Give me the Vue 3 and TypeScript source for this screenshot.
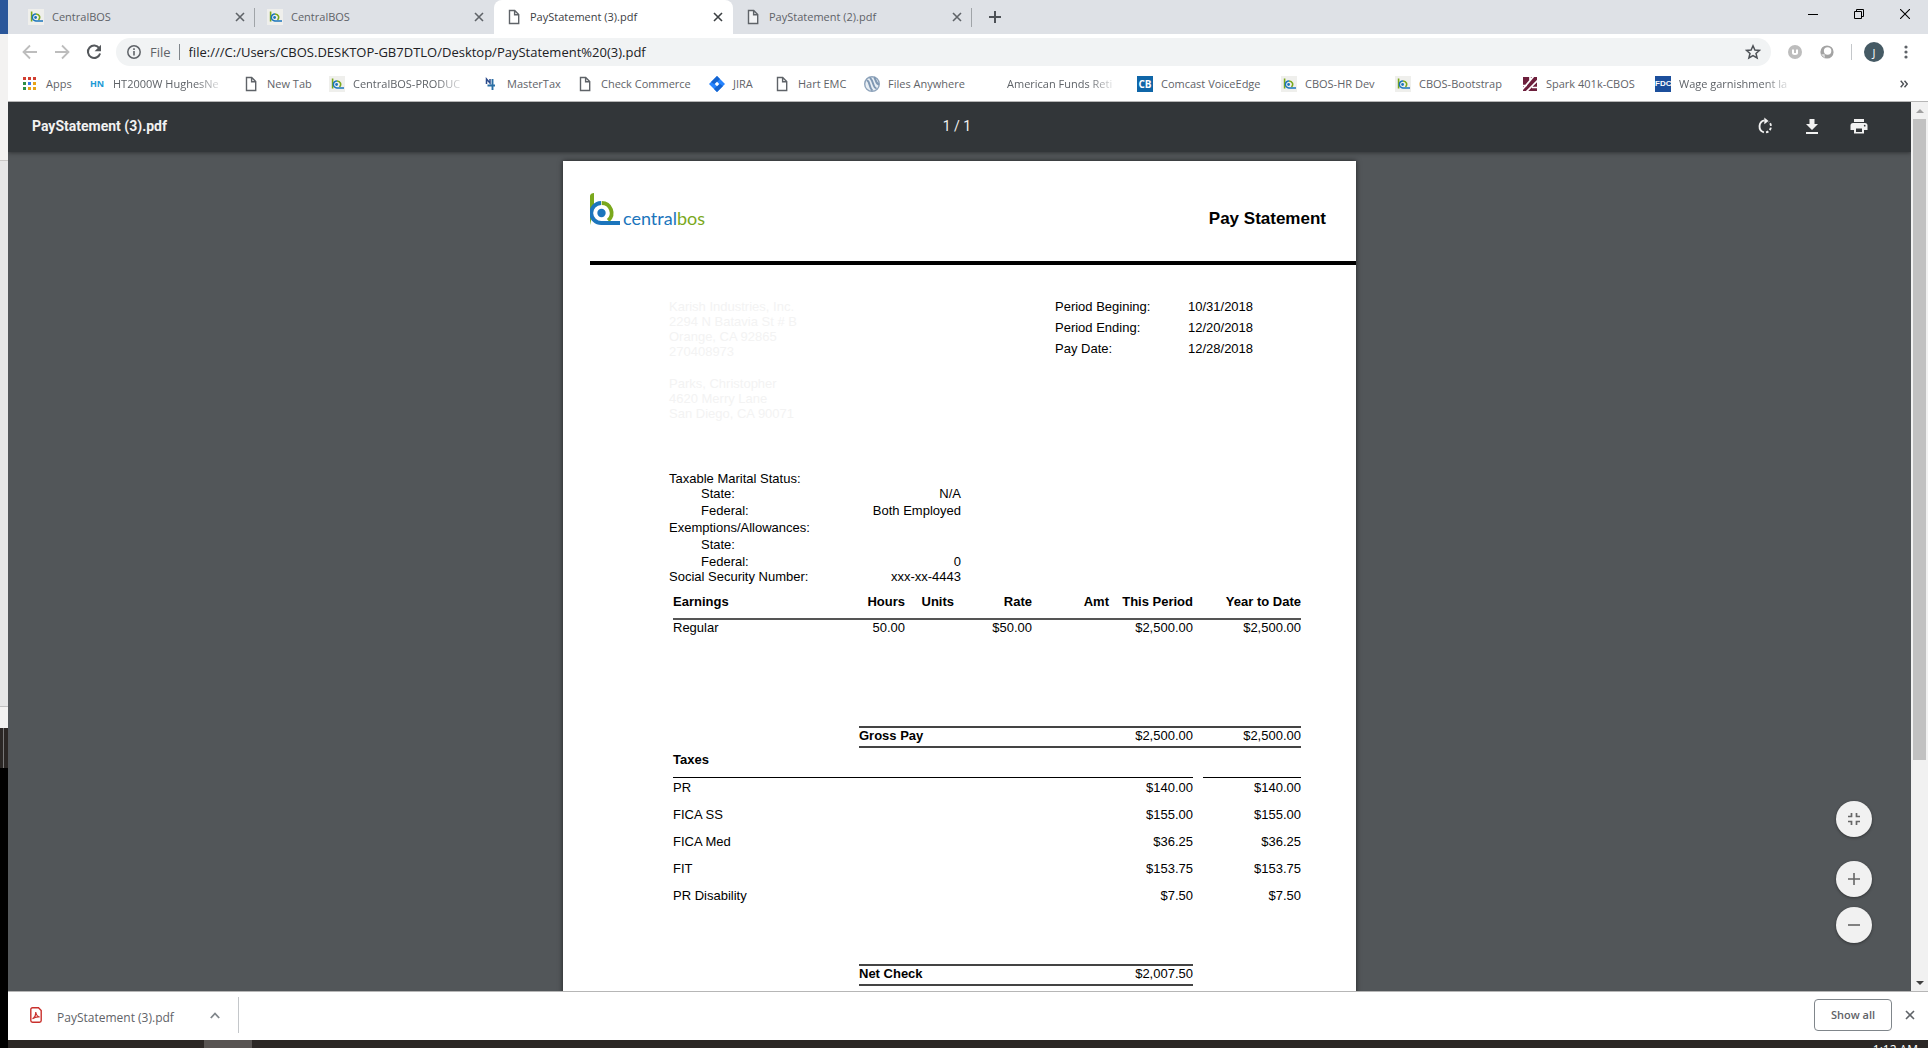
<script setup lang="ts">
import { ref } from 'vue'

interface Tab {
  title: string
  icon: 'cbos' | 'doc'
}
interface Bookmark {
  label: string
  icon: string
  width: number
  fade?: boolean
}
interface TaxLine {
  name: string
  current: string
  ytd: string
}

const tabs: Tab[] = [
  { title: 'CentralBOS', icon: 'cbos' },
  { title: 'CentralBOS', icon: 'cbos' },
  { title: 'PayStatement (3).pdf', icon: 'doc' },
  { title: 'PayStatement (2).pdf', icon: 'doc' },
]
const activeTab = ref(2)
const address = ref('file:///C:/Users/CBOS.DESKTOP-GB7DTLO/Desktop/PayStatement%20(3).pdf')

const bookmarks: Bookmark[] = [
  { label: 'Apps', icon: 'apps', width: 67 },
  { label: 'HT2000W HughesNe', icon: 'hn', width: 154, fade: true },
  { label: 'New Tab', icon: 'doc', width: 86 },
  { label: 'CentralBOS-PRODUC', icon: 'cbos', width: 154, fade: true },
  { label: 'MasterTax', icon: 'mt', width: 94 },
  { label: 'Check Commerce', icon: 'doc', width: 132 },
  { label: 'JIRA', icon: 'jira', width: 65 },
  { label: 'Hart EMC', icon: 'doc', width: 90 },
  { label: 'Files Anywhere', icon: 'files', width: 119 },
  { label: 'American Funds Reti', icon: 'none', width: 154, fade: true },
  { label: 'Comcast VoiceEdge', icon: 'cb', width: 144 },
  { label: 'CBOS-HR Dev', icon: 'cbos', width: 114 },
  { label: 'CBOS-Bootstrap', icon: 'cbos', width: 127 },
  { label: 'Spark 401k-CBOS', icon: 'spark', width: 133 },
  { label: 'Wage garnishment la', icon: 'fdc', width: 153, fade: true },
]

const periods = [
  ['Period Begining:', '10/31/2018'],
  ['Period Ending:', '12/20/2018'],
  ['Pay Date:', '12/28/2018'],
]

const status = [
  { label: 'Taxable Marital Status:', value: '', sub: false, tight: true },
  { label: 'State:', value: 'N/A', sub: true, tight: false },
  { label: 'Federal:', value: 'Both Employed', sub: true, tight: false },
  { label: 'Exemptions/Allowances:', value: '', sub: false, tight: false },
  { label: 'State:', value: '', sub: true, tight: false },
  { label: 'Federal:', value: '0', sub: true, tight: true },
  { label: 'Social Security Number:', value: 'xxx-xx-4443', sub: false, tight: true },
]

const taxes: TaxLine[] = [
  { name: 'PR', current: '$140.00', ytd: '$140.00' },
  { name: 'FICA SS', current: '$155.00', ytd: '$155.00' },
  { name: 'FICA Med', current: '$36.25', ytd: '$36.25' },
  { name: 'FIT', current: '$153.75', ytd: '$153.75' },
  { name: 'PR Disability', current: '$7.50', ytd: '$7.50' },
]

const appColors = ['#d23f31', '#d23f31', '#d23f31', '#2f8f46', '#3b78e7', '#e8a317', '#2f8f46', '#e8a317', '#e8a317']
</script>

<template>
  <div class="desktop">
    <svg class="sprite" aria-hidden="true">
      <symbol id="i-cbos" viewBox="0 0 16 16">
        <rect width="16" height="16" fill="#efefec" />
        <path d="M3.6 2.5v10" stroke="#7aa81c" stroke-width="1.6" fill="none" />
        <path d="M8 4.9a3.6 3.4 0 0 1 2.4 6" stroke="#7aa81c" stroke-width="1.5" fill="none" />
        <path d="M8 4.9a3.5 3.5 0 0 0-.2 7H15" stroke="#1b75bc" stroke-width="1.5" fill="none" />
        <circle cx="7.6" cy="8.5" r="1.4" fill="#1b75bc" />
      </symbol>
      <symbol id="i-doc" viewBox="0 0 16 16">
        <path d="M3.5 1.5h5.2l4 4v9H3.5z M8.6 1.7v4h4" fill="#fff" fill-opacity="0.6" stroke="#5f6368" stroke-width="1.4" />
      </symbol>
      <symbol id="i-close" viewBox="0 0 10 10">
        <path d="M1 1l8 8M9 1l-8 8" fill="none" stroke="currentColor" stroke-width="1.6" />
      </symbol>
    </svg>

    <div class="behind" aria-hidden="true">
      <i class="b-title"></i><i class="b-ribbon"></i><i class="b-body"></i><i class="b-status"></i><i class="b-task"></i>
    </div>

    <main class="browser">
      <header class="tabstrip">
        <div
          v-for="(tab, i) in tabs"
          :key="i"
          class="tab"
          :class="{ active: i === activeTab, divided: i !== activeTab && i + 1 !== activeTab }"
        >
          <svg class="ico"><use :href="'#i-' + tab.icon" /></svg>
          <button type="button" class="tab-title" @click="activeTab = i">{{ tab.title }}</button>
          <button type="button" class="tab-close" aria-label="Close tab"><svg><use href="#i-close" /></svg></button>
        </div>
        <button type="button" class="new-tab" aria-label="New tab">
          <svg viewBox="0 0 12 12"><path d="M6 0v12M0 6h12" stroke="#4d5156" stroke-width="2" /></svg>
        </button>
        <div class="win-controls">
          <button type="button" aria-label="Minimize">
            <svg viewBox="0 0 10 10"><path d="M0 5.5h10" stroke="#000" /></svg>
          </button>
          <button type="button" aria-label="Restore">
            <svg viewBox="0 0 10 10"><path d="M.5 2.5h7v7h-7zM2.500 2.500v-2h7v7h-2" fill="none" stroke="#000" /></svg>
          </button>
          <button type="button" aria-label="Close">
            <svg viewBox="0 0 10 10"><path d="M0 0l10 10M10 0L0 10" stroke="#000" stroke-width="1.1" /></svg>
          </button>
        </div>
      </header>

      <div class="navbar">
        <button type="button" class="nav" aria-label="Back">
          <svg viewBox="0 0 16 16"><path d="M15 8H2M8 1.500L1.500 8 8 14.500" fill="none" stroke="#bdbdbd" stroke-width="1.8" /></svg>
        </button>
        <button type="button" class="nav" aria-label="Forward">
          <svg viewBox="0 0 16 16"><path d="M1 8h13M8 1.500L14.500 8 8 14.500" fill="none" stroke="#bdbdbd" stroke-width="1.800" /></svg>
        </button>
        <button type="button" class="nav" aria-label="Reload">
          <svg viewBox="0 0 16 16">
            <path d="M13.300 4.300A6.200 6.200 0 1 0 14.100 9.500" fill="none" stroke="#55585c" stroke-width="2" />
            <path d="M15 .8v6.400H8.600z" fill="#55585c" />
          </svg>
        </button>
        <div class="omnibox">
          <svg class="info" viewBox="0 0 14 14">
            <circle cx="7" cy="7" r="6.200" fill="none" stroke="#5f6368" stroke-width="1.500" />
            <path d="M7 6v4.500M7 3.300v1.600" stroke="#5f6368" stroke-width="1.600" />
          </svg>
          <span class="scheme">File</span>
          <input v-model="address" class="url" aria-label="Address" spellcheck="false" />
          <button type="button" class="star" aria-label="Bookmark this page">
            <svg viewBox="0 0 16 16">
              <path d="M8 1.800l1.900 4.200 4.600.4-3.500 3 1.100 4.500L8 11.500l-4.100 2.400L5 9.400l-3.500-3 4.600-.4z" fill="none" stroke="#4d5156" stroke-width="1.500" />
            </svg>
          </button>
        </div>
        <div class="extensions">
          <svg viewBox="0 0 14 14">
            <circle cx="7" cy="7" r="7" fill="#bdbdbd" />
            <path d="M4 4.500h2V8h2V4.500h2V8c0 1.300-1 2-3 2s-3-.7-3-2z" fill="#fff" />
          </svg>
          <svg viewBox="0 0 14 14">
            <circle cx="7" cy="7" r="6.600" fill="#a3a3a3" />
            <circle cx="7.600" cy="6" r="3.700" fill="#fff" />
            <path d="M1 9.500l3.500-.5L5 13z" fill="#dedede" />
          </svg>
        </div>
        <button type="button" class="avatar">J</button>
        <button type="button" class="kebab" aria-label="Menu">
          <svg viewBox="0 0 4 14"><circle cx="2" cy="2" r="1.600" /><circle cx="2" cy="7" r="1.600" /><circle cx="2" cy="12" r="1.600" /></svg>
        </button>
      </div>

      <nav class="bookmarks">
        <a v-for="(b, i) in bookmarks" :key="i" href="#" class="bookmark" :style="{ width: b.width + 'px' }">
          <svg v-if="b.icon === 'cbos' || b.icon === 'doc'" class="ico"><use :href="'#i-' + b.icon" /></svg>
          <svg v-else-if="b.icon === 'apps'" class="ico" viewBox="0 0 16 16">
            <rect
              v-for="(c, n) in appColors"
              :key="n"
              :x="1 + (n % 3) * 5"
              :y="1 + Math.floor(n / 3) * 5"
              width="3"
              height="3"
              :fill="c"
            />
          </svg>
          <svg v-else-if="b.icon === 'mt'" class="ico" viewBox="0 0 16 16">
            <path d="M3.500 8V3l3.500 4V3" fill="none" stroke="#2b4a8b" stroke-width="1.500" />
            <path d="M9.500 3v11M4.500 9.500h7.500" fill="none" stroke="#2a6fa5" stroke-width="1.900" />
          </svg>
          <svg v-else-if="b.icon === 'jira'" class="ico" viewBox="0 0 16 16">
            <path d="M8 0l8 8-8 8-8-8z" fill="#2684ff" />
            <path d="M8 0l3 3-3 3-3 2-3-2zM8 16l-3-3 3-3 3-2 3 2z" fill="#1463cf" />
            <path d="M8 5.800L10.200 8 8 10.200 5.800 8z" fill="#fff" />
          </svg>
          <svg v-else-if="b.icon === 'files'" class="ico" viewBox="0 0 16 16">
            <circle cx="8" cy="8" r="7.300" fill="#e8eef4" stroke="#8fa4bb" stroke-width="1.400" />
            <path d="M2.500 4.500c3-1 3 8.500 6 10M5.500 2c3.500 0 3.500 11 7 10M10 1.500c2 1 1.500 6.500 5 7" fill="none" stroke="#7f97b2" stroke-width="2" />
          </svg>
          <svg v-else-if="b.icon === 'spark'" class="ico" viewBox="0 0 16 16">
            <path d="M1 1h14v14H1z" fill="#6d1f3c" />
            <path d="M-.5 14.500L11.500.5M4.500 15.500L16.500 3.500M8 0v5M0 9.500h5M10 11.500h6" stroke="#fff" stroke-width="1.700" />
          </svg>
          <span v-else class="ico badge" :class="b.icon">{{ b.icon === 'none' ? '' : b.icon.toUpperCase() }}</span>
          <span class="label" :class="{ fade: b.fade }">{{ b.label }}</span>
        </a>
        <button type="button" class="more" aria-label="More bookmarks">
          <svg viewBox="0 0 8 8"><path d="M.7 .7L3.500 4 .7 7.300M4.500.7L7.300 4 4.500 7.300" fill="none" stroke="#4d5156" stroke-width="1.400" /></svg>
        </button>
      </nav>

      <section class="viewer">
        <div class="pdf">
          <div class="pdf-bar">
            <h1>PayStatement (3).pdf</h1>
            <span class="page-no">1 / 1</span>
            <div class="pdf-tools">
              <button type="button" aria-label="Rotate">
                <svg viewBox="0 0 18 18">
                  <path d="M8.500 3.400a6.200 6.200 0 0 0-.6 12" fill="none" stroke="#f1f1f1" stroke-width="1.900" />
                  <path d="M8.300.4l4.200 3.500-4.200 3.400z" fill="#f1f1f1" />
                  <path d="M10 15.400a6.200 6.200 0 0 0 5-6 6.200 6.200 0 0 0-2.200-4.600" fill="none" stroke="#f1f1f1" stroke-width="1.900" stroke-dasharray="2.600 1.800" />
                </svg>
              </button>
              <button type="button" aria-label="Download">
                <svg viewBox="0 0 18 18"><path d="M6.500 2h5v5H15l-6 6-6-6h3.500zM3 15h12v2H3z" fill="#f1f1f1" /></svg>
              </button>
              <button type="button" aria-label="Print">
                <svg viewBox="0 0 18 18">
                  <path d="M4 2h10v3H4zM3 6h12a2.500 2.500 0 0 1 2.500 2.500V13H14v3.500H4V13H.5V8.500A2.500 2.500 0 0 1 3 6zm3 5.500V15h6v-3.500zM14.700 7.800a.8.8 0 1 0 0 1.700.8.800 0 0 0 0-1.700z" fill="#f1f1f1" fill-rule="evenodd" />
                </svg>
              </button>
            </div>
          </div>

          <article class="page">
            <header class="letterhead">
              <div class="logo">
                <svg viewBox="0 0 30 32">
                  <path d="M0 32V3c0-2 2-3 4-3v14z" fill="#7aa81c" />
                  <path d="M11.700 10a10 10 0 0 1 6.500 17.500" fill="none" stroke="#7aa81c" stroke-width="3.800" />
                  <path d="M11 10a9.800 9.800 0 0 0 .5 20H30" fill="none" stroke="#1b75bc" stroke-width="3.900" />
                  <circle cx="11.500" cy="20" r="4.200" fill="#1b75bc" />
                </svg>
                <span class="wordmark">central<b>bos</b></span>
              </div>
              <h2>Pay Statement</h2>
            </header>

            <div class="sheet">
              <div class="parties">
                <div class="faded">
                  <address>Karish Industries, Inc.<br />2294 N Batavia St # B<br />Orange, CA 92865<br />270408973</address>
                  <address>Parks, Christopher<br />4620 Merry Lane<br />San Diego, CA 90071</address>
                </div>
                <table class="periods">
                  <tbody>
                    <tr v-for="p in periods" :key="p[0]">
                      <th scope="row">{{ p[0] }}</th>
                      <td>{{ p[1] }}</td>
                    </tr>
                  </tbody>
                </table>
              </div>

              <table class="status">
                <tbody>
                  <tr v-for="(s, i) in status" :key="i" :class="{ sub: s.sub, tight: s.tight }">
                    <th scope="row">{{ s.label }}</th>
                    <td>{{ s.value }}</td>
                  </tr>
                </tbody>
              </table>

              <table class="pay">
                <colgroup>
                  <col class="c-name" /><col class="c-hours" /><col class="c-units" /><col class="c-rate" />
                  <col class="c-amt" /><col class="c-period" /><col class="c-gap" /><col class="c-ytd" />
                </colgroup>
                <thead>
                  <tr class="heads">
                    <th scope="col" class="left">Earnings</th>
                    <th scope="col">Hours</th>
                    <th scope="col">Units</th>
                    <th scope="col">Rate</th>
                    <th scope="col">Amt</th>
                    <th scope="col">This Period</th>
                    <th></th>
                    <th scope="col">Year to Date</th>
                  </tr>
                </thead>
                <tbody>
                  <tr class="earning">
                    <td class="left">Regular</td>
                    <td>50.00</td>
                    <td></td>
                    <td>$50.00</td>
                    <td></td>
                    <td>$2,500.00</td>
                    <td></td>
                    <td>$2,500.00</td>
                  </tr>
                  <tr class="total gross">
                    <td class="blank"></td>
                    <th scope="row" colspan="4" class="left">Gross Pay</th>
                    <td>$2,500.00</td>
                    <td></td>
                    <td>$2,500.00</td>
                  </tr>
                  <tr class="tax-head">
                    <th colspan="6" class="left">Taxes</th>
                    <td class="blank"></td>
                    <td></td>
                  </tr>
                  <tr v-for="t in taxes" :key="t.name" class="tax">
                    <td colspan="5" class="left">{{ t.name }}</td>
                    <td>{{ t.current }}</td>
                    <td></td>
                    <td>{{ t.ytd }}</td>
                  </tr>
                  <tr class="total net">
                    <td class="blank"></td>
                    <th scope="row" colspan="4" class="left">Net Check</th>
                    <td>$2,007.50</td>
                    <td class="blank"></td>
                    <td class="blank"></td>
                  </tr>
                </tbody>
              </table>
            </div>
          </article>

          <div class="zoom-tools">
            <button type="button" aria-label="Fit to page">
              <svg viewBox="0 0 12 12"><path d="M0 3.500h3.500V0M8.500 0v3.500H12M0 8.500h3.500V12M8.500 12V8.500H12" fill="none" stroke="#666" stroke-width="1.700" /></svg>
            </button>
            <button type="button" aria-label="Zoom in">
              <svg viewBox="0 0 12 12"><path d="M6 0v12M0 6h12" stroke="#666" stroke-width="1.600" /></svg>
            </button>
            <button type="button" aria-label="Zoom out">
              <svg viewBox="0 0 12 12"><path d="M0 6h12" stroke="#666" stroke-width="1.600" /></svg>
            </button>
          </div>
        </div>

        <div class="scrollbar" aria-hidden="true">
          <svg viewBox="0 0 8 4"><path d="M0 4l4-4 4 4z" fill="#a0a0a0" /></svg>
          <div class="track"><div class="thumb"></div></div>
          <svg viewBox="0 0 8 4"><path d="M0 0h8L4 4z" fill="#404040" /></svg>
        </div>
      </section>

      <footer class="downloads">
        <div class="download">
          <svg class="pdf-ico" viewBox="0 0 12 16">
            <path d="M.8 2.500A1.700 1.700 0 0 1 2.500.8h6l2.700 2.700v10a1.700 1.700 0 0 1-1.700 1.700h-7A1.700 1.700 0 0 1 .8 13.500z" fill="#fff" stroke="#c9302c" stroke-width="1.400" />
            <path d="M2.500 11.800C4.500 10.500 6 7.500 5.700 5c.5 2.800 2 4.700 4 5-2.500-.4-5 .2-7.200 1.800z" fill="none" stroke="#c9302c" stroke-width="1.200" />
          </svg>
          <a href="#" class="file">PayStatement (3).pdf</a>
          <button type="button" class="chev" aria-label="Download options">
            <svg viewBox="0 0 10 7"><path d="M.8 6L5 1.500 9.200 6" fill="none" stroke="#80868b" stroke-width="1.800" /></svg>
          </button>
        </div>
        <button type="button" class="show-all">Show all</button>
        <button type="button" class="close-bar" aria-label="Close downloads"><svg><use href="#i-close" /></svg></button>
      </footer>
    </main>

    <div class="taskbar"><i></i><span>1:12 AM</span></div>
  </div>
</template>

<style>
html,
body {
  margin: 0;
  background: #000;
}
</style>

<style scoped>
.desktop {
  display: grid;
  grid-template: minmax(0, 1fr) 8px / 8px minmax(0, 1fr);
  height: 100vh;
  overflow: hidden;
  background: #000;
  font-family: 'Open Sans', 'Noto Sans', sans-serif;
  font-size: 11px;
  color: #5f6368;
}
.sprite {
  position: absolute;
  width: 0;
  height: 0;
}
button {
  display: flex;
  align-items: center;
  justify-content: center;
  margin: 0;
  padding: 0;
  border: 0;
  background: none;
  font: inherit;
  color: inherit;
}
a {
  color: inherit;
  text-decoration: none;
}

.behind {
  display: flex;
  flex-direction: column;
}
.b-title {
  height: 34px;
  background: #2b579a;
}
.b-ribbon {
  height: 126px;
  background: #f3f2f1;
}
.b-body {
  height: 545px;
  border-top: 1px solid #c8c6c4;
  border-bottom: 1px solid #c0c0c0;
  background: #e6e6e6;
}
.b-status {
  height: 21px;
  background: #f3f2f1;
}
.b-task {
  height: 40px;
  background: linear-gradient(90deg, #2b2725 3px, #777 3px, #777 4px, #2b2725 4px);
}

.browser {
  display: flex;
  flex-direction: column;
  min-height: 0;
  background: #fff;
}

.tabstrip {
  display: flex;
  height: 34px;
  padding-left: 8px;
  background: #dee1e6;
}
.tab {
  position: relative;
  display: flex;
  align-items: center;
  box-sizing: border-box;
  width: 239px;
  padding: 0 10px 0 12px;
  height: 34px;
}
.ico {
  flex: none;
  width: 16px;
  height: 16px;
}
.tab-title {
  flex: 1;
  justify-content: flex-start;
  margin-left: 8px;
  line-height: 16px;
}
.tab-close svg,
.close-bar svg {
  width: 10px;
  height: 10px;
}
.tab.active {
  border-radius: 8px 8px 0 0;
  background: #fff;
  color: #3c4043;
}
.tab.divided::after {
  content: '';
  position: absolute;
  top: 8px;
  right: 0;
  width: 1px;
  height: 19px;
  background: #a0a4a8;
}
.new-tab {
  width: 46px;
}
.new-tab svg {
  width: 12px;
  height: 12px;
}
.win-controls {
  display: flex;
  height: 28px;
  margin-left: auto;
}
.win-controls button {
  width: 46px;
}
.win-controls svg {
  width: 10px;
  height: 10px;
}

.navbar {
  display: flex;
  align-items: center;
  height: 36px;
  padding-left: 6px;
}
.nav {
  width: 32px;
}
.nav svg {
  width: 16px;
  height: 16px;
}
.omnibox {
  display: flex;
  flex: 1;
  align-items: center;
  height: 28px;
  margin-left: 6px;
  padding: 0 10px 0 11px;
  border-radius: 14px;
  background: #f1f3f4;
  font-size: 13px;
}
.info {
  width: 14px;
  height: 14px;
}
.scheme {
  margin-left: 9px;
  padding-right: 8px;
  border-right: 1px solid #80868b;
  line-height: 16px;
}
.url {
  flex: 1;
  min-width: 0;
  margin-left: 9px;
  padding: 0;
  border: 0;
  outline: 0;
  background: none;
  font: inherit;
  color: #202124;
}
.star svg {
  width: 16px;
  height: 16px;
}
.extensions {
  display: flex;
  gap: 18px;
  padding: 1px 17px;
  border-right: 1px solid #c4c7ca;
}
.extensions svg {
  width: 14px;
  height: 14px;
}
.avatar {
  width: 20px;
  height: 20px;
  margin-left: 12px;
  border-radius: 50%;
  background: #455a64;
  color: #fff;
}
.kebab {
  width: 44px;
}
.kebab svg {
  width: 4px;
  height: 14px;
  fill: #5f6368;
}

.bookmarks {
  display: flex;
  align-items: center;
  box-sizing: border-box;
  height: 32px;
  padding: 0 0 4px 14px;
  border-bottom: 1px solid #b6b6b6;
}
.bookmark {
  display: flex;
  flex: none;
  align-items: center;
  gap: 8px;
  box-sizing: border-box;
  line-height: 16px;
  white-space: nowrap;
}
.label.fade {
  mask-image: linear-gradient(90deg, #000 calc(100% - 24px), rgba(0, 0, 0, 0.2));
}
.badge {
  font-size: 9px;
  font-weight: 700;
  text-align: center;
}
.badge.hn {
  color: #1c9ad6;
}
.badge.cb {
  background: #0f66a8;
  color: #fff;
  font-size: 10px;
}
.badge.fdc {
  background: #1c4f9c;
  color: #fff;
  font-family: 'Liberation Sans', sans-serif;
  font-size: 8px;
}
.more {
  width: 48px;
  margin-left: auto;
}
.more svg {
  width: 8px;
  height: 8px;
}

.viewer {
  display: flex;
  flex: 1;
  min-height: 0;
}
.pdf {
  position: relative;
  flex: 1;
  min-width: 0;
  overflow: hidden;
  background: #525659;
}
.pdf-bar {
  position: relative;
  display: grid;
  grid-template-columns: 1fr auto 1fr;
  align-items: center;
  box-sizing: border-box;
  height: 50px;
  padding: 0 29px 2px 24px;
  background: #323639;
  box-shadow: 0 1px 4px rgba(0, 0, 0, 0.4);
  font-family: Roboto, sans-serif;
  font-size: 14px;
  color: #f1f1f1;
}
.pdf-bar h1 {
  margin: 0;
  font-size: 14px;
  font-weight: 700;
}
.pdf-tools {
  display: flex;
  justify-content: flex-end;
}
.pdf-tools button {
  width: 47px;
}
.pdf-tools svg {
  width: 18px;
  height: 18px;
}

.page {
  box-sizing: border-box;
  width: 793px;
  min-height: 1026px;
  margin: 9px auto;
  padding-left: 27px;
  background: #fff;
  box-shadow: 0 0 5px rgba(0, 0, 0, 0.6);
  font-family: 'Liberation Sans', Arial, sans-serif;
  font-size: 13px;
  line-height: 15px;
  color: #000;
}
.letterhead {
  display: flex;
  justify-content: space-between;
  height: 100px;
  padding-right: 30px;
  border-bottom: 4px solid #000;
}
.logo {
  display: flex;
  padding-top: 32px;
}
.logo svg {
  width: 30px;
  height: 32px;
}
.wordmark {
  margin: 14px 0 0 3px;
  font-family: Lato, sans-serif;
  font-size: 18px;
  line-height: 22px;
  color: #1b75bc;
}
.wordmark b {
  font-weight: 400;
  color: #7aa81c;
}
.letterhead h2 {
  margin: 47px 0 0;
  font-size: 17px;
  line-height: 22px;
}
.sheet {
  padding: 34px 0 0 79px;
}
.parties {
  display: flex;
}
.faded {
  width: 386px;
  color: #f3f3f3;
}
address {
  margin-bottom: 17px;
  font-style: normal;
}
table {
  border-spacing: 0;
}
th,
td {
  box-sizing: border-box;
  padding: 0;
  vertical-align: top;
  white-space: nowrap;
}
.periods {
  align-self: flex-start;
}
.periods th,
.status th {
  font-weight: 400;
  text-align: left;
}
.periods th {
  width: 133px;
  height: 21px;
}
.status {
  width: 292px;
  margin-top: 33px;
}
.status tr {
  height: 17px;
}
.status tr.tight {
  height: 15px;
}
.status .sub th {
  padding-left: 32px;
}
.status td {
  text-align: right;
}

.pay {
  width: 628px;
  margin: 9px 0 0 4px;
  table-layout: fixed;
}
.c-name {
  width: 186px;
}
.c-hours {
  width: 46px;
}
.c-units {
  width: 49px;
}
.c-rate {
  width: 78px;
}
.c-amt {
  width: 77px;
}
.c-period {
  width: 84px;
}
.c-gap {
  width: 10px;
}
.c-ytd {
  width: 98px;
}
.pay th,
.pay td {
  text-align: right;
}
.pay .left {
  text-align: left;
}
.heads th {
  height: 27px;
  padding-top: 1px;
  border-bottom: 2px solid #555;
}
.earning td {
  height: 106px;
}
.total th,
.total td {
  height: 22px;
  border: solid #444;
  border-width: 2px 0;
}
.pay .blank {
  border: 0;
}
.tax-head th,
.tax-head td {
  height: 30px;
  padding-top: 4px;
  border-bottom: 1px solid #000;
}
.tax td {
  height: 27px;
  padding-top: 2px;
}
.tax:nth-last-child(2) td {
  height: 78px;
}

.zoom-tools {
  position: absolute;
  right: 39px;
  bottom: 48px;
  display: flex;
  flex-direction: column;
  gap: 10px;
}
.zoom-tools button {
  width: 36px;
  height: 36px;
  border-radius: 50%;
  background: #f1f1f1;
  box-shadow: 0 1px 3px rgba(0, 0, 0, 0.4);
}
.zoom-tools button:first-child {
  margin-bottom: 14px;
}
.zoom-tools svg {
  width: 12px;
  height: 12px;
}

.scrollbar {
  display: flex;
  flex-direction: column;
  align-items: center;
  width: 17px;
  background: #f1f1f1;
}
.scrollbar svg {
  width: 8px;
  height: 4px;
  margin: 7px 0 6px;
}
.track {
  flex: 1;
  width: 13px;
}
.thumb {
  height: 75%;
  background: #c1c1c1;
}

.downloads {
  display: flex;
  align-items: center;
  box-sizing: border-box;
  height: 49px;
  padding-bottom: 2px;
  border-top: 1px solid #b6b6b6;
}
.download {
  display: flex;
  align-items: center;
  width: 230px;
  height: 36px;
  border-right: 1px solid #c4c7ca;
}
.pdf-ico {
  width: 12px;
  height: 16px;
  margin-left: 22px;
}
.file {
  flex: 1;
  margin-left: 15px;
  padding-top: 6px;
  font-size: 12px;
  line-height: 16px;
}
.chev {
  width: 46px;
}
.chev svg {
  width: 10px;
  height: 7px;
}
.show-all {
  width: 78px;
  height: 32px;
  margin-left: auto;
  padding-bottom: 2px;
  border: 1px solid #80868b;
  border-radius: 4px;
  font-weight: 600;
}
.close-bar {
  width: 36px;
}

.taskbar {
  display: flex;
  grid-column: 2;
  justify-content: space-between;
  overflow: hidden;
  background: #2b2725;
  color: #fff;
}
.taskbar i {
  width: 48px;
  margin-left: 196px;
  background: #585452;
}
.taskbar span {
  padding: 2px 10px 0 0;
  font-size: 12px;
  line-height: 16px;
}
</style>
